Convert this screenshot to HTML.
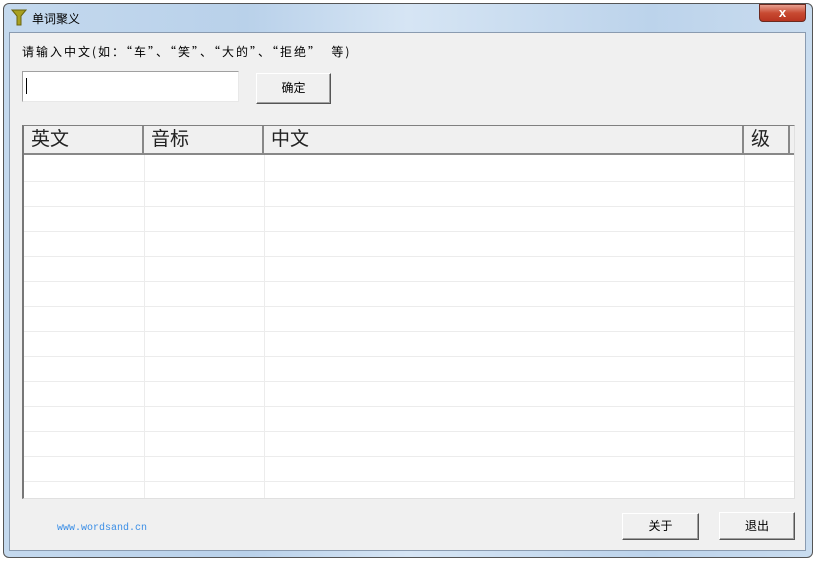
<html><head><style>
body{margin:0;width:816px;height:561px;background:#fff;font-family:"Liberation Sans","Noto Sans CJK SC",sans-serif;position:relative;overflow:hidden}
.a{position:absolute}
.r{position:absolute;left:24px;width:770px;height:1px;background:#ececec}
.btn{position:absolute;background:#f0f0f0;border:1px solid;border-color:#fff #555 #555 #fff;box-shadow:inset -1px -1px #a0a0a0;font-size:12px;text-align:center;box-sizing:border-box}
.h{position:absolute;top:126px;height:28px;font-size:19px;line-height:28px;padding-left:7px;box-sizing:border-box;border-right:2px solid #888;color:#222}
</style></head><body>
<div class="a" style="left:3px;top:3px;width:810px;height:555px;border:1px solid #555;border-radius:6px;box-sizing:border-box;background:linear-gradient(90deg,#c4d9ee,#b9d1ea 30%,#d6e5f4 50%,#bcd3eb 80%,#c9dcef)"></div>
<svg class="a" style="left:11px;top:8px" width="16" height="18"><path d="M1 2h14l-5 6v9h-4v-9z" fill="#a8a020" stroke="#6a6410" stroke-width="1"/></svg>
<div class="a" style="left:32px;top:10px;font-size:12px;color:#000">单词聚义</div>
<div class="a" style="left:759px;top:4px;width:47px;height:18px;background:linear-gradient(#e8a090,#c84a32 50%,#b83420);border:1px solid #6b2a20;border-radius:0 0 4px 4px;box-sizing:border-box;color:#fff;text-align:center;font-weight:bold;font-size:13px;line-height:16px">x</div>
<div class="a" style="left:9px;top:32px;width:797px;height:519px;background:#f0f0f0;border:1px solid #8a9bb0;box-sizing:border-box"></div>
<div class="a" style="left:22px;top:44px;font-size:12px;color:#000;white-space:pre;font-family:'Noto Sans CJK SC',sans-serif;line-height:16px;letter-spacing:2px">请输入中文(如：“车”、“笑”、“大的”、“拒绝”  等)</div>
<div class="a" style="left:22px;top:71px;width:217px;height:31px;background:#fff;border:1px solid;border-color:#a0a0a0 #e8e8e8 #e8e8e8 #a0a0a0;box-sizing:border-box"><div class="a" style="left:3px;top:6px;width:1px;height:16px;background:#000"></div></div>
<div class="btn" style="left:256px;top:73px;width:75px;height:31px;line-height:29px">确定</div>
<div class="a" style="left:22px;top:125px;width:773px;height:374px;background:#fff;border:1px solid;border-color:#808080 #e0e0e0 #e0e0e0 #808080;border-left:2px solid #777;box-sizing:border-box"></div>
<div class="r" style="top:181px"></div><div class="r" style="top:206px"></div><div class="r" style="top:231px"></div><div class="r" style="top:256px"></div><div class="r" style="top:281px"></div><div class="r" style="top:306px"></div><div class="r" style="top:331px"></div><div class="r" style="top:356px"></div><div class="r" style="top:381px"></div><div class="r" style="top:406px"></div><div class="r" style="top:431px"></div><div class="r" style="top:456px"></div><div class="r" style="top:481px"></div>
<div class="a" style="left:144px;top:154px;width:1px;height:344px;background:#ececec"></div>
<div class="a" style="left:264px;top:154px;width:1px;height:344px;background:#ececec"></div>
<div class="a" style="left:744px;top:154px;width:1px;height:344px;background:#ececec"></div>
<div class="a" style="left:24px;top:126px;width:770px;height:29px;background:#f0f0f0;border-bottom:2px solid #888;box-sizing:border-box"></div>
<div class="h" style="left:24px;width:120px">英文</div>
<div class="h" style="left:144px;width:120px">音标</div>
<div class="h" style="left:264px;width:480px">中文</div>
<div class="h" style="left:744px;width:46px">级</div>
<div class="a" style="left:57px;top:523px;font-family:'Liberation Mono',monospace;font-size:10px;color:#3a8ee6">www.wordsand.cn</div>
<div class="btn" style="left:622px;top:513px;width:77px;height:27px;line-height:25px">关于</div>
<div class="btn" style="left:719px;top:512px;width:76px;height:28px;line-height:26px">退出</div>
</body></html>
